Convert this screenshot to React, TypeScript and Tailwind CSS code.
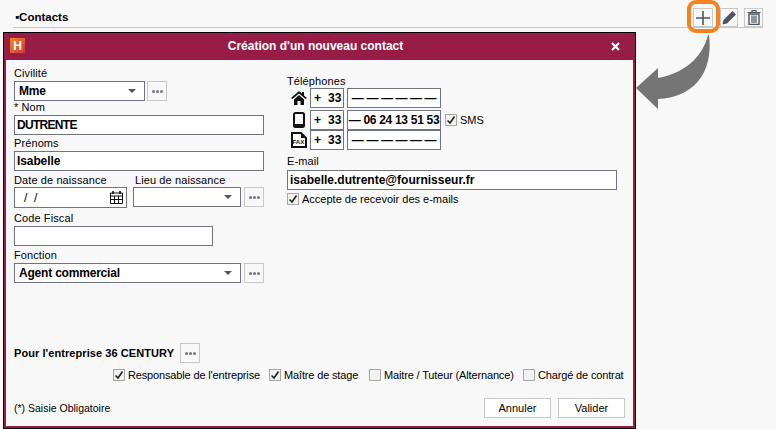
import React from "react";

const inputBox =
  "h-5 border border-[#6f7480] bg-white flex items-center text-[12px] font-bold text-black";

const DotsButton = () => (
  <div className="w-5 h-5 border border-[#c8c8c8] flex items-center justify-center gap-px shrink-0">
    <span className="w-[3px] h-[3px] rounded-full bg-[#777]" />
    <span className="w-[3px] h-[3px] rounded-full bg-[#777]" />
    <span className="w-[3px] h-[3px] rounded-full bg-[#777]" />
  </div>
);

const Caret = () => (
  <span className="w-0 h-0 border-x-[4px] border-x-transparent border-t-[4px] border-t-[#555] mr-2 ml-auto" />
);

const Label = ({
  children,
  tight,
  className = "",
}: {
  children: React.ReactNode;
  tight?: boolean;
  className?: string;
}) => (
  <div
    className={`h-[15px] ${tight ? "leading-[15px]" : "leading-[17px]"} text-[11px] tracking-[0.1px] text-black ${className}`}
  >
    {children}
  </div>
);

const Select = ({ value, className = "" }: { value?: string; className?: string }) => (
  <div className={`${inputBox} pl-[4px] tracking-[-0.2px] ${className}`}>
    <span>{value}</span>
    <Caret />
  </div>
);

const Check = ({ checked, label }: { checked?: boolean; label: string }) => (
  <div className="flex items-center gap-[3px] h-3 text-[11px] text-black whitespace-nowrap">
    <span className="w-3 h-3 border border-[#a8a8a8] bg-[#f2f2f2] flex items-center justify-center shrink-0">
      {checked && (
        <svg width="10" height="10" viewBox="0 0 10 10">
          <path d="M1.5 5.5 L4 8 L8.5 1.5" fill="none" stroke="#222" strokeWidth="1.6" />
        </svg>
      )}
    </span>
    {label}
  </div>
);

const HomeIcon = () => (
  <svg width="16" height="14" viewBox="0 0 16 14">
    <path d="M0 7 L8 0 L11 2.5 V1 H13 V4.5 L16 7 L14.5 8 L8 2.5 L1.5 8 Z" fill="#111" />
    <path d="M3 8.5 L8 4 L13 8.5 V14 H9.5 V10 H6.5 V14 H3 Z" fill="#111" />
  </svg>
);

const MobileIcon = () => (
  <svg width="12" height="16" viewBox="0 0 12 16">
    <rect x="1" y="1" width="10" height="14" rx="1.5" fill="none" stroke="#111" strokeWidth="2" />
    <rect x="1" y="12" width="10" height="3" fill="#111" />
  </svg>
);

const FaxIcon = () => (
  <svg width="16" height="16" viewBox="0 0 16 16">
    <path d="M1 1 H10 L15 6 V15 H1 Z" fill="white" stroke="#111" strokeWidth="2" />
    <path d="M10 1 V6 H15 Z" fill="#111" />
    <text x="1.5" y="12" fontSize="6" fontWeight="bold" fontFamily="Liberation Sans, sans-serif" fill="#111">FAX</text>
  </svg>
);

const PhoneRow = ({
  icon,
  number,
  dashes,
  extra,
  className = "",
}: {
  icon: React.ReactNode;
  number: string;
  dashes?: boolean;
  extra?: React.ReactNode;
  className?: string;
}) => (
  <div className={`flex items-center ${className}`}>
    <div className="w-[23px] flex justify-center shrink-0">{icon}</div>
    <div className={`${inputBox} w-[34px] pl-[3px] gap-[7px] text-[11px]`}>
      <span>+</span>
      <span>33</span>
    </div>
    <div
      className={`${inputBox} w-[94px] ml-[3px] justify-center whitespace-nowrap overflow-hidden ${
        dashes ? "tracking-[-0.4px]" : "text-[11px] tracking-[-0.3px]"
      }`}
    >
      {number}
    </div>
    {extra && <div className="ml-[4px]">{extra}</div>}
  </div>
);

export default function App() {
  return (
    <div
      className="relative w-[776px] h-[429px] overflow-hidden bg-[#f8f8f8]"
      style={{ fontFamily: '"Liberation Sans", Arial, sans-serif' }}
    >
      {/* page header */}
      <div className="mx-[13px] h-[28px] border-b border-[#c8c8c8] flex items-start">
        <div className="mt-[9px] ml-[2px] text-[11.5px] leading-[16px] font-bold text-black">▪Contacts</div>
        <div className="ml-auto flex mt-[8px]">
          <div className="w-[20px] h-[19px] border border-[#c8c8c8] flex items-center justify-center">
            <svg width="14" height="14" viewBox="0 0 14 14">
              <path d="M7 0 V14 M0 7 H14" stroke="#4d5560" strokeWidth="1.6" />
            </svg>
          </div>
          <div className="ml-[7px] w-[18px] h-[19px] border border-[#c8c8c8] flex items-center justify-center">
            <svg width="15" height="15" viewBox="0 0 15 15">
              <path d="M0.5 14.5 L1.5 10 L10.5 1 L14 4.5 L5 13.5 Z" fill="#4d5560" />
            </svg>
          </div>
          <div className="ml-[6px] w-[19px] h-[19px] border border-[#c8c8c8] flex items-center justify-center">
            <svg width="14" height="15" viewBox="0 0 14 15">
              <path d="M5 2 V0.7 H9 V2 M0.5 2.5 H13.5" fill="none" stroke="#4d5560" strokeWidth="1.2" />
              <path d="M2 4 H12 V14.5 H2 Z" fill="none" stroke="#4d5560" strokeWidth="1.4" />
              <path d="M5 5.5 V13 M7 5.5 V13 M9 5.5 V13" stroke="#4d5560" strokeWidth="1.2" />
            </svg>
          </div>
        </div>
      </div>

      {/* dialog */}
      <div className="mt-[4px] ml-[3px] w-[633px] h-[397px] border border-black bg-[#f8f8f8] flex flex-col">
        <div className="flex-1 flex flex-col border-x-2 border-b-2 border-[#971c46] min-h-0">
          <div className="relative h-[27px] bg-[#971c46] flex items-center justify-center pr-[8px] pb-[2px] shrink-0">
            <div className="absolute left-[4px] top-[5px] w-[15px] h-[15px] bg-gradient-to-br from-[#f08a1d] to-[#d0303c] flex items-center justify-center text-white text-[12px] font-bold leading-none">
              H
            </div>
            <span className="text-white text-[12px] font-bold">Création d'un nouveau contact</span>
            <svg className="absolute right-[13px] top-[9px]" width="9" height="9" viewBox="0 0 9 9">
              <path d="M1 1 L8 8 M8 1 L1 8" stroke="white" strokeWidth="2.2" />
            </svg>
          </div>

          <div className="flex-1 px-[8px] flex flex-col">
            <div className="flex h-[283px]">
              {/* left column */}
              <div className="w-[250px] pt-[5px]">
                <Label>Civilité</Label>
                <div className="flex mt-[1px]">
                  <Select value="Mme" className="w-[131px]" />
                  <div className="ml-[2px]">
                    <DotsButton />
                  </div>
                </div>
                <Label tight className="mt-[-1px]">* Nom</Label>
                <div className={`${inputBox} w-[250px] pl-[2px] text-[11px] tracking-[-0.7px]`}>DUTRENTE</div>
                <Label>Prénoms</Label>
                <div className={`${inputBox} w-[250px] pl-[2px] mt-[1px] tracking-[-0.1px]`}>Isabelle</div>
                <div className="flex mt-[1px]">
                  <div className="w-[119px]">
                    <Label>Date de naissance</Label>
                    <div className={`${inputBox} w-[113px] h-[21px] pl-[9px] font-normal whitespace-pre text-[11px]`}>
                      <span>/  /</span>
                      <svg className="ml-auto mr-[3px]" width="13" height="13" viewBox="0 0 13 13">
                        <path d="M3 0 V3 M10 0 V3" stroke="#111" strokeWidth="1.6" />
                        <path d="M0.5 2 H12.5 V12.5 H0.5 Z M0.5 5 H12.5 M0.5 8.5 H12.5 M4.5 5 V12.5 M8.5 5 V12.5" fill="none" stroke="#111" />
                      </svg>
                    </div>
                  </div>
                  <div>
                    <Label className="pl-[2px]">Lieu de naissance</Label>
                    <div className="flex">
                      <Select className="w-[108px]" />
                      <div className="ml-[3px]">
                        <DotsButton />
                      </div>
                    </div>
                  </div>
                </div>
                <Label tight className="mt-[3px]">Code Fiscal</Label>
                <div className={`${inputBox} w-[199px]`} />
                <Label className="mt-[1px]">Fonction</Label>
                <div className="flex mt-[1px]">
                  <Select value="Agent commercial" className="w-[227px]" />
                  <div className="ml-[3px]">
                    <DotsButton />
                  </div>
                </div>
              </div>

              {/* right column */}
              <div className="ml-[23px] w-[330px] pt-[13px]">
                <Label>Téléphones</Label>
                <PhoneRow icon={<HomeIcon />} number="— — — — — —" dashes />
                <PhoneRow
                  className="mt-[2px]"
                  icon={<MobileIcon />}
                  number="— 06 24 13 51 53"
                  extra={<Check checked label="SMS" />}
                />
                <PhoneRow className="mt-0" icon={<FaxIcon />} number="— — — — — —" dashes />
                <Label tight className="mt-[4px]">E-mail</Label>
                <div className={`${inputBox} w-[330px] pl-[2px] mt-[1px]`}>isabelle.dutrente@fournisseur.fr</div>
                <div className="mt-[3px]">
                  <Check checked label="Accepte de recevoir des e-mails" />
                </div>
              </div>
            </div>

            <div className="flex items-center h-5 text-[11px] tracking-[0.07px] font-bold text-black">
              Pour l'entreprise 36 CENTURY
              <div className="ml-[6px] font-normal">
                <DotsButton />
              </div>
            </div>
            <div className="flex mt-[6px] ml-[99px] tracking-[-0.15px]">
              <div className="w-[156px]">
                <Check checked label="Responsable de l'entreprise" />
              </div>
              <div className="w-[100px]">
                <Check checked label="Maître de stage" />
              </div>
              <div className="w-[154px]">
                <Check label="Maitre / Tuteur (Alternance)" />
              </div>
              <Check label="Chargé de contrat" />
            </div>
            <div className="flex items-center mt-[17px]">
              <span className="text-[10.5px] pt-[1px] text-black">(*) Saisie Obligatoire</span>
              <div className="ml-auto flex gap-[7px]">
                <div className="w-[67px] h-5 border border-[#c8c8c8] bg-white flex items-center justify-center text-[11px] text-black">
                  Annuler
                </div>
                <div className="w-[67px] h-5 border border-[#c8c8c8] bg-white flex items-center justify-center text-[11px] text-black">
                  Valider
                </div>
              </div>
            </div>
          </div>
        </div>
      </div>

      {/* annotation: highlight and arrow */}
      <div className="absolute left-[687px] top-0 w-[33px] h-[33px] border-[4px] border-[#f5821f] rounded-[9px]" />
      <svg className="absolute left-[630px] top-[30px]" width="90" height="85" viewBox="0 0 90 85">
        <path
          d="M78 5 C74 22 60 42 28 48 V38 L6 58 L28 79 V69 C62 68 84 44 79 5 Z"
          fill="#757575"
        />
      </svg>
    </div>
  );
}
